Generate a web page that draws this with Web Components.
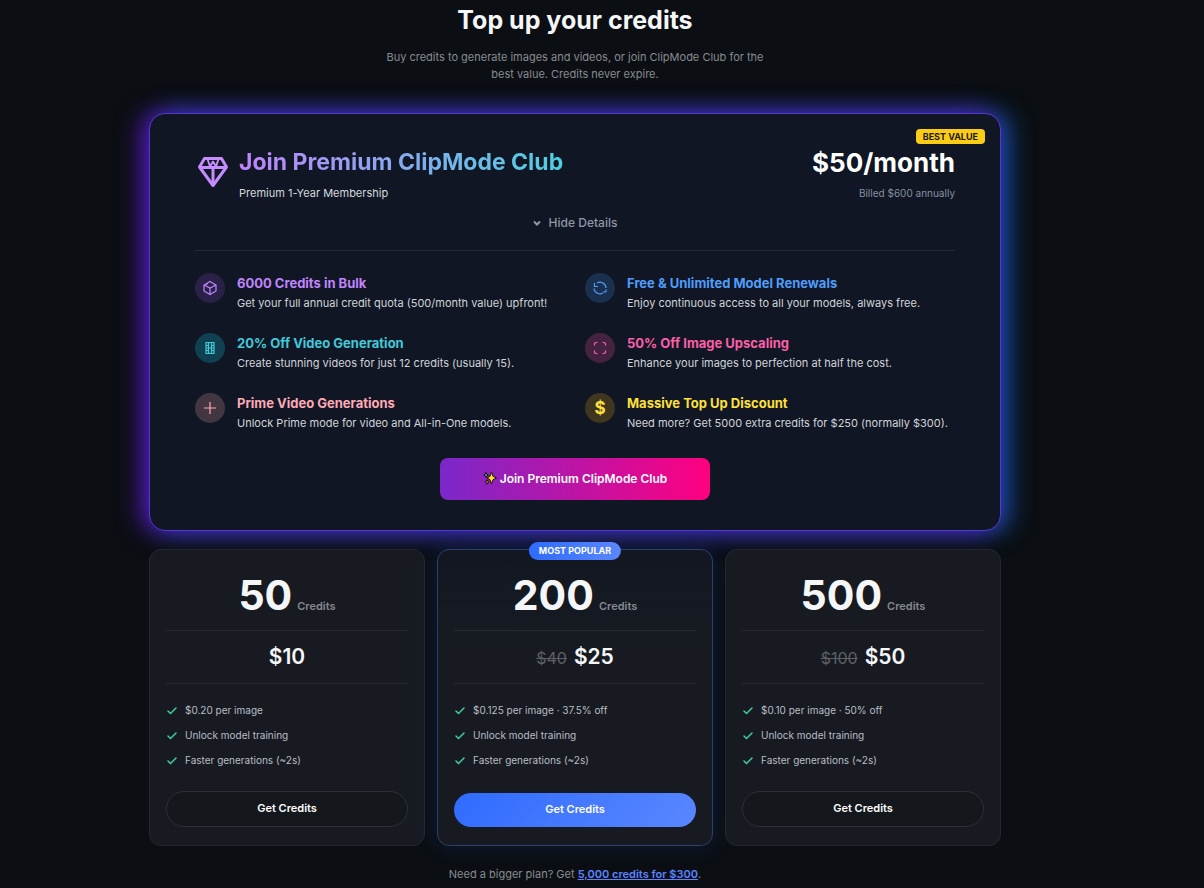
<!DOCTYPE html>
<html lang="en">
<head>
<meta charset="utf-8">
<meta name="viewport" content="width=device-width, initial-scale=1">
<title>Top up your credits</title>
<style>
    body {
        margin: 0;
        background: #0b0f13;
        color: #f5f6f8;
        font-family: Inter, "Liberation Sans", sans-serif;
        font-size: 11px;
    }
</style>
</head>
<body>
<credits-page>
    <premium-card>
        <premium-feature color="#c084fc" tint="#2a2148" icon="cube">
            6000 Credits in Bulk
            <span slot="text">Get your full annual credit quota (500/month value) upfront!</span>
        </premium-feature>
        <premium-feature color="#4f9dfb" tint="#1b304f" icon="renew">
            Free &amp; Unlimited Model Renewals
            <span slot="text">Enjoy continuous access to all your models, always free.</span>
        </premium-feature>
        <premium-feature color="#42c9da" tint="#0f4152" icon="film">
            20% Off Video Generation
            <span slot="text">Create stunning videos for just 12 credits (usually 15).</span>
        </premium-feature>
        <premium-feature color="#fb5fa9" tint="#43233f" icon="expand">
            50% Off Image Upscaling
            <span slot="text">Enhance your images to perfection at half the cost.</span>
        </premium-feature>
        <premium-feature color="#ffa9b6" tint="#413642" icon="plus">
            Prime Video Generations
            <span slot="text">Unlock Prime mode for video and All-in-One models.</span>
        </premium-feature>
        <premium-feature color="#fde03a" tint="#3f3620" icon="dollar">
            Massive Top Up Discount
            <span slot="text">Need more? Get 5000 extra credits for $250 (normally $300).</span>
        </premium-feature>
    </premium-card>
    <credit-card slot="packs" amount="50" price="$10">
        <check-item>$0.20 per image</check-item>
        <check-item>Unlock model training</check-item>
        <check-item>Faster generations (~2s)</check-item>
    </credit-card>
    <credit-card slot="packs" amount="200" price="$25" old-price="$40" badge="MOST POPULAR" featured>
        <check-item>$0.125 per image · 37.5% off</check-item>
        <check-item>Unlock model training</check-item>
        <check-item>Faster generations (~2s)</check-item>
    </credit-card>
    <credit-card slot="packs" amount="500" price="$50" old-price="$100">
        <check-item>$0.10 per image · 50% off</check-item>
        <check-item>Unlock model training</check-item>
        <check-item>Faster generations (~2s)</check-item>
    </credit-card>
</credits-page>

<script>
const ICONS = {
    cube: '<path d="M8 1.5 14 5v6l-6 3.5L2 11V5z"/><path d="M2 5l6 3 6-3M8 8v6.5M5 3.5V5"/>',
    renew: '<path d="M2.5 3v3.5H6"/><path d="M5 3a6 6 0 0 1 9 5M14 9.5V12"/><path d="M2 8.5a6 6 0 0 0 9 4.5M14 12h-3"/>',
    film: '<path d="M4 2.5h8v11H4zM6.5 2.5v11M9.5 2.5v11M4 5.5h2.5M4 8h8M4 10.5h2.5M9.5 5.5H12M9.5 10.5H12"/>',
    expand: '<path d="M2.5 5.5v-2l1-1h2M10.5 2.5h2l1 1v2M13.5 10.5v2l-1 1h-2M5.5 13.5h-2l-1-1v-2"/>',
    plus: '<path d="M8 2v12M2 8h12"/>'
};

class CreditsPage extends HTMLElement {
    constructor() {
        super();
        this.attachShadow({ mode: 'open' });
        this.shadowRoot.innerHTML = `
        <style>
            :host {
                display: block;
                padding: 0 54px 0 0;
            }
            main {
                max-width: 852px;
                margin: 0 auto;
            }
            header {
                text-align: center;
                padding: 3px 0 30px;
            }
            h1 {
                margin: 0 0 12px;
                font-size: 25px;
                line-height: 34px;
                font-weight: 700;
            }
            header p {
                max-width: 400px;
                margin: 0 auto;
                line-height: 17px;
                color: #878b91;
            }
            .packs {
                display: grid;
                grid-template-columns: repeat(3, 1fr);
                gap: 12px;
                margin-top: 18px;
            }
            footer {
                margin-top: 20px;
                text-align: center;
                line-height: 17px;
                color: #878b91;
            }
            footer a {
                color: #5b83ff;
                font-weight: 600;
            }
        </style>
        <main>
            <header>
                <h1>Top up your credits</h1>
                <p>Buy credits to generate images and videos, or join ClipMode Club for the best value. Credits never expire.</p>
            </header>
            <slot></slot>
            <div class="packs"><slot name="packs"></slot></div>
            <footer>Need a bigger plan? Get <a href="#bulk">5,000 credits for $300</a>.</footer>
        </main>
        `;
    }
}

class PremiumCard extends HTMLElement {
    constructor() {
        super();
        this.attachShadow({ mode: 'open' });
        this.shadowRoot.innerHTML = `
        <style>
            :host {
                display: block;
                position: relative;
                box-sizing: border-box;
                padding: 30px 45px;
                border: 1px solid #5438d6;
                border-radius: 16px;
                background: #101623;
                box-shadow: -8px 0 24px rgba(110, 20, 230, 0.7), 8px 0 24px rgba(20, 110, 225, 0.7);
            }
            .badge {
                position: absolute;
                top: 15px;
                right: 15px;
                padding: 0 7px;
                border-radius: 4px;
                background: #facc15;
                color: #1c1a10;
                font-size: 9px;
                line-height: 15px;
                font-weight: 700;
            }
            .top {
                display: flex;
                justify-content: space-between;
            }
            .name {
                display: flex;
                gap: 8px;
            }
            .name svg {
                width: 36px;
                height: 36px;
                padding-top: 10px;
            }
            h2 {
                margin: 0;
                font-size: 23px;
                line-height: 36px;
                font-weight: 700;
                color: transparent;
                background: linear-gradient(90deg, #c084fc, #4dd0e1);
                -webkit-background-clip: text;
                background-clip: text;
            }
            p {
                margin: 0;
                line-height: 26px;
            }
            .name p {
                color: #d5d9df;
            }
            .cost {
                text-align: right;
            }
            .cost strong {
                display: block;
                font-size: 26px;
                line-height: 38px;
                font-weight: 700;
                color: #fff;
            }
            .cost p {
                font-size: 10px;
                line-height: 22px;
                color: #8490a2;
            }
            .toggle {
                display: flex;
                align-items: center;
                gap: 8px;
                margin: 7px auto 17px;
                padding: 0;
                border: 0;
                background: none;
                color: #8e98a8;
                font: 500 12px/20px Inter, "Liberation Sans", sans-serif;
                cursor: pointer;
            }
            .toggle svg {
                width: 8px;
                height: 8px;
            }
            .features {
                display: grid;
                grid-template-columns: 1fr 1fr;
                gap: 20px;
                padding-top: 21px;
                border-top: 1px solid #272a39;
            }
            .join {
                display: flex;
                align-items: center;
                justify-content: center;
                gap: 3px;
                width: 270px;
                height: 42px;
                margin: 26px auto 0;
                padding: 0 0 2px;
                border: 0;
                border-radius: 8px;
                background: linear-gradient(90deg, #7928ca, #ff0080);
                color: #fff;
                font: 600 12px Inter, "Liberation Sans", sans-serif;
                cursor: pointer;
            }
            .join svg {
                width: 14px;
                height: 14px;
            }
        </style>
        <span class="badge">BEST VALUE</span>
        <div class="top">
            <div class="name">
                <svg viewBox="0 0 36 36" fill="none" stroke="#c58cfd" stroke-width="3" stroke-linejoin="round" aria-hidden="true">
                    <path d="M9.5 4.5h17l5 8.5L18 31.5 4.5 13z"/>
                    <path d="M4.5 13.5h27M18 13.5v18"/>
                    <path d="M12.5 5 15 12.5l3-5 3 5L23.5 5" stroke-width="2"/>
                </svg>
                <div>
                    <h2>Join Premium ClipMode Club</h2>
                    <p>Premium 1-Year Membership</p>
                </div>
            </div>
            <div class="cost">
                <strong>$50/month</strong>
                <p>Billed $600 annually</p>
            </div>
        </div>
        <button class="toggle" type="button" aria-expanded="true">
            <svg viewBox="0 0 8 8" fill="none" stroke="currentColor" stroke-width="2" aria-hidden="true"><path d="M1 2.5 4 5.5 7 2.5"/></svg>
            Hide Details
        </button>
        <div class="features"><slot></slot></div>
        <button class="join" type="button">
            <svg viewBox="0 0 14 14" stroke="#17130a" stroke-width="1" stroke-linejoin="round" aria-hidden="true">
                <path fill="#ffe21f" d="M8.5 1 10 5.3 13.5 7 10 8.7 8.5 13 7 8.7 4 7 7 5.3z"/>
                <path fill="#35b8c8" d="M3 1.5 3.8 3.2 5.3 4 3.8 4.8 3 6.5 2.2 4.8.7 4 2.2 3.2z"/>
                <path fill="#f08a2c" d="M4 8.8 4.7 10.3 6 11 4.7 11.7 4 13.2 3.3 11.7 2 11 3.3 10.3z"/>
            </svg>
            Join Premium ClipMode Club
        </button>
        `;
    }
}

class PremiumFeature extends HTMLElement {
    constructor() {
        super();
        this.attachShadow({ mode: 'open' });
    }
    connectedCallback() {
        const icon = this.getAttribute('icon');
        const picture = icon === 'dollar'
            ? '<b>$</b>'
            : `<svg viewBox="0 0 16 16" fill="none" stroke="currentColor" stroke-width="1.2" aria-hidden="true">${ICONS[icon]}</svg>`;
        this.shadowRoot.innerHTML = `
        <style>
            :host {
                display: flex;
                gap: 12px;
            }
            .icon {
                display: flex;
                flex: none;
                align-items: center;
                justify-content: center;
                width: 30px;
                height: 30px;
                margin-top: 1px;
                border-radius: 50%;
                background: ${this.getAttribute('tint')};
                color: ${this.getAttribute('color')};
            }
            svg {
                width: 16px;
                height: 16px;
            }
            b {
                font-size: 17px;
            }
            h3 {
                margin: 0;
                font-size: 13px;
                line-height: 22px;
                font-weight: 700;
                color: ${this.getAttribute('color')};
            }
            p {
                margin: 0;
                line-height: 18px;
                color: #d0d4da;
            }
        </style>
        <span class="icon">${picture}</span>
        <div>
            <h3><slot></slot></h3>
            <p><slot name="text"></slot></p>
        </div>
        `;
    }
}

class CreditCard extends HTMLElement {
    constructor() {
        super();
        this.attachShadow({ mode: 'open' });
    }
    connectedCallback() {
        const badge = this.getAttribute('badge');
        const oldPrice = this.getAttribute('old-price');
        this.shadowRoot.innerHTML = `
        <style>
            :host {
                display: flex;
                flex-direction: column;
                position: relative;
                box-sizing: border-box;
                padding: 16px 16px 18px;
                border: 1px solid #24272e;
                border-radius: 12px;
                background: #171b21;
            }
            :host([featured]) {
                border-color: #2a4170;
                background: linear-gradient(#121722, #171b21 35%);
                box-shadow: 0 0 24px rgba(40, 90, 255, 0.16);
            }
            .badge {
                position: absolute;
                top: -8px;
                left: 50%;
                transform: translateX(-50%);
                padding: 0 10px;
                border-radius: 9px;
                background: linear-gradient(90deg, #2f6bff, #5a87ff);
                color: #fff;
                font-size: 9px;
                line-height: 18px;
                font-weight: 700;
                white-space: nowrap;
            }
            .amount, .price {
                display: flex;
                align-items: baseline;
                justify-content: center;
                border-bottom: 1px solid #25282f;
            }
            .amount {
                gap: 5px;
                padding: 5px 0 11px;
                font-weight: 600;
                color: #858990;
            }
            .amount strong {
                font-size: 41px;
                line-height: 48px;
                font-weight: 700;
                color: #f5f6f8;
            }
            .price {
                gap: 7px;
                padding: 12px 0;
            }
            .price strong {
                font-size: 21px;
                line-height: 28px;
                font-weight: 600;
            }
            .price s {
                font-size: 16px;
                line-height: 20px;
                color: #5c6066;
            }
            ul {
                display: flex;
                flex-direction: column;
                gap: 8px;
                margin: 18px 0 22px;
                padding: 0;
            }
            button {
                box-sizing: border-box;
                height: 36px;
                margin-top: auto;
                padding: 0 0 2px;
                border: 1px solid #2d3037;
                border-radius: 18px;
                background: #14181d;
                color: #fff;
                font: 600 11px Inter, "Liberation Sans", sans-serif;
                cursor: pointer;
            }
            :host([featured]) button {
                height: 34px;
                border: 0;
                background: linear-gradient(135deg, #2f6bff, #5a87ff);
            }
        </style>
        ${badge ? `<span class="badge">${badge}</span>` : ''}
        <div class="amount"><strong>${this.getAttribute('amount')}</strong> <span>Credits</span></div>
        <div class="price">${oldPrice ? `<s>${oldPrice}</s>` : ''} <strong>${this.getAttribute('price')}</strong></div>
        <ul role="list"><slot></slot></ul>
        <button type="button">Get Credits</button>
        `;
    }
}

class CheckItem extends HTMLElement {
    constructor() {
        super();
        this.attachShadow({ mode: 'open' });
        this.shadowRoot.innerHTML = `
        <style>
            :host {
                display: flex;
                align-items: center;
                gap: 7px;
                font-size: 10px;
                line-height: 17px;
                color: #b9bdc5;
            }
            svg {
                width: 12px;
                height: 12px;
            }
        </style>
        <svg viewBox="0 0 12 12" fill="none" stroke="#3ecf9b" stroke-width="1.5" stroke-linecap="round" aria-hidden="true"><path d="M2 6 4.500 8.500 10 3"/></svg>
        <span><slot></slot></span>
        `;
    }
    connectedCallback() {
        this.setAttribute('role', 'listitem');
    }
}

customElements.define('credits-page', CreditsPage);
customElements.define('premium-card', PremiumCard);
customElements.define('premium-feature', PremiumFeature);
customElements.define('credit-card', CreditCard);
customElements.define('check-item', CheckItem);
</script>
</body>
</html>
